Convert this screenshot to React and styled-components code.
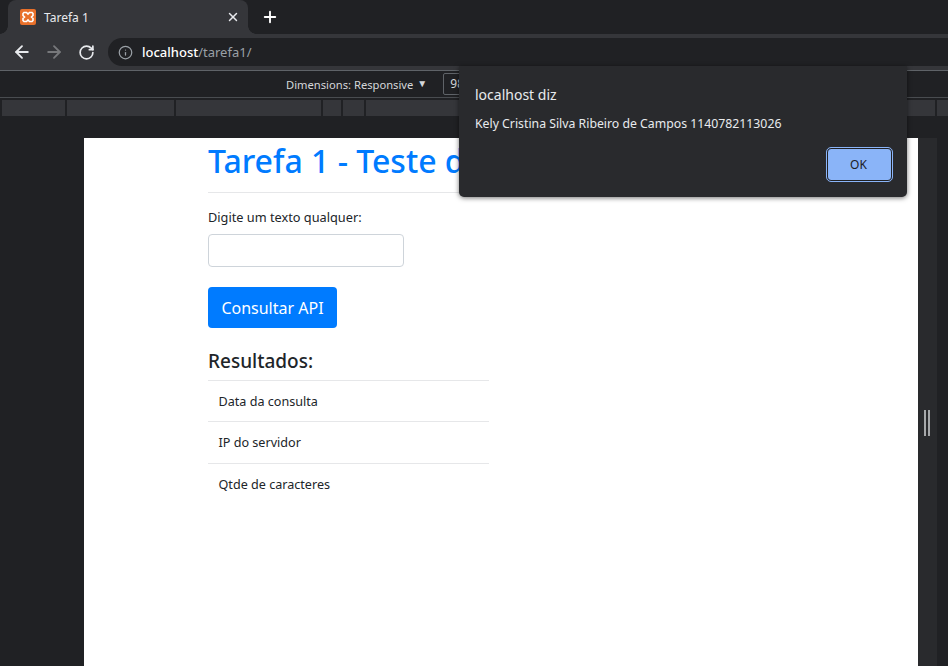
import React from "react";
import styled, { createGlobalStyle } from "styled-components";
import { ArrowLeft, ArrowRight, RotateCw, Info, X, Plus } from "lucide-react";

const GlobalStyle = createGlobalStyle`
  html, body {
    margin: 0;
    padding: 0;
    height: 100%;
    overflow: hidden;
    background: #202124;
  }
  * {
    box-sizing: border-box;
  }
`;

const uiFont = `"Noto Sans", "Open Sans", sans-serif`;

const Window = styled.div`
  position: relative;
  width: 948px;
  height: 666px;
  display: flex;
  flex-direction: column;
  overflow: hidden;
  font-family: ${uiFont};
  background: #202124;
`;

const TabStrip = styled.div`
  height: 34px;
  flex: none;
  display: flex;
  align-items: flex-end;
  padding-left: 8px;
  gap: 13px;
  background: #202124;
`;

const Tab = styled.div`
  position: relative;
  width: 240px;
  height: 34px;
  display: flex;
  align-items: center;
  padding: 0 8px 0 12px;
  gap: 8px;
  background: #35363a;
  border-radius: 8px 8px 0 0;
  color: #e8eaed;
  font-size: 12px;

  &::before,
  &::after {
    content: "";
    position: absolute;
    bottom: 0;
    width: 8px;
    height: 8px;
  }
  &::before {
    left: -8px;
    background: radial-gradient(circle at 0 0, transparent 7.5px, #35363a 8px);
  }
  &::after {
    right: -8px;
    background: radial-gradient(circle at 100% 0, transparent 7.5px, #35363a 8px);
  }
`;

const TabTitle = styled.span`
  flex: 1;
`;

const NewTab = styled.div`
  display: flex;
  align-items: center;
  height: 34px;
  color: #fff;
`;

const Toolbar = styled.div`
  height: 36px;
  flex: none;
  display: flex;
  align-items: center;
  padding-left: 12px;
  gap: 12px;
  background: #35363a;
`;

const NavButton = styled.div`
  width: 20px;
  display: flex;
  justify-content: center;
  color: ${(props) => (props.$disabled ? "#77787b" : "#e8eaed")};
`;

const Omnibox = styled.div`
  flex: 1;
  height: 28px;
  margin-left: 0;
  display: flex;
  align-items: center;
  gap: 9px;
  padding-left: 10px;
  border-radius: 14px 0 0 14px;
  background: #202124;
  color: #9aa0a6;
`;

const Url = styled.span`
  font-size: 13px;
  color: #9aa0a6;

  b {
    font-weight: 500;
    color: #fff;
  }
`;

const DeviceBar = styled.div`
  height: 28px;
  flex: none;
  display: flex;
  align-items: center;
  padding-left: 286px;
  border-top: 1px solid #5f6368;
  border-bottom: 1px solid #494c50;
  background: #202124;
  color: #d5d7da;
  font-size: 11.2px;
`;

const Caret = styled.span`
  width: 12px;
  margin-left: 4px;
  font-size: 10px;
  line-height: 14px;
  margin-top: -3px;
`;

const SizeInput = styled.div`
  width: 60px;
  height: 22px;
  margin-left: 14px;
  padding-left: 6px;
  line-height: 20px;
  font-size: 12px;
  border: 1px solid #5f6368;
  border-radius: 2px;
`;

const Ruler = styled.div`
  height: 16px;
  flex: none;
  margin-top: 2px;
  display: flex;
  padding-left: 2px;
  gap: 2px;
`;

const RulerStep = styled.div`
  width: ${(props) => props.$w}px;
  background: #35363a;
`;

const Canvas = styled.div`
  flex: 1;
  display: flex;
  margin-top: 22px;
  min-height: 0;
`;

const Gutter = styled.div`
  width: 84px;
  flex: none;
`;

const Page = styled.div`
  width: 834px;
  flex: none;
  overflow: hidden;
  padding-left: 124px;
  background: #fff;
  color: #212529;
`;

const Heading = styled.h1`
  margin: 0;
  height: 55px;
  line-height: 46px;
  width: 281px;
  white-space: nowrap;
  font-size: 32px;
  font-weight: 500;
  color: #007bff;
  border-bottom: 1px solid #e6e7e9;
`;

const Label = styled.label`
  display: block;
  margin-top: 15px;
  line-height: 18px;
  font-size: 12.75px;
`;

const TextInput = styled.input`
  display: block;
  width: 196px;
  height: 33px;
  margin-top: 8px;
  border: 1px solid #ced4da;
  border-radius: 4px;
  background: #fff;
  outline: none;
`;

const SubmitButton = styled.button`
  display: block;
  width: 129px;
  height: 41px;
  margin-top: 20px;
  padding: 0;
  border: none;
  border-radius: 4px;
  background: #007bff;
  color: #fff;
  font-family: ${uiFont};
  font-size: 16px;
`;

const ResultsTitle = styled.h4`
  margin: 20px 0 0;
  height: 32px;
  line-height: 26px;
  font-size: 19px;
  font-weight: 500;
`;

const ResultList = styled.ul`
  width: 281px;
  margin: 0;
  padding: 0;
  list-style: none;
`;

const ResultItem = styled.li`
  height: 41.4px;
  padding-left: 10.5px;
  line-height: 41px;
  font-size: 12.6px;
  border-top: 1px solid #e6e7e9;
`;

const ResizeHandle = styled.div`
  width: 19px;
  flex: none;
  display: flex;
  justify-content: center;
  align-items: center;
  gap: 2px;
  padding-top: 42px;
  padding-right: 1px;
  background: #292a2d;
`;

const Grip = styled.div`
  width: 2px;
  height: 26px;
  background: #a6a8aa;
`;

const Dialog = styled.div`
  position: absolute;
  left: 459px;
  top: 66px;
  width: 448px;
  height: 131px;
  padding: 16px;
  border-radius: 0 0 5px 5px;
  background: #292a2d;
  color: #e8eaed;
  box-shadow: 0 1px 5px rgba(0, 0, 0, 0.55);
`;

const DialogTitle = styled.div`
  line-height: 26px;
  font-size: 14px;
`;

const DialogMessage = styled.div`
  margin-top: 7px;
  line-height: 18px;
  font-size: 12.28px;
`;

const DialogFooter = styled.div`
  display: flex;
  justify-content: flex-end;
  margin-top: 15px;
`;

const OkButton = styled.button`
  width: 65px;
  height: 33px;
  padding: 0 2px 0 0;
  margin-right: -1px;
  border: 1.5px solid #202124;
  border-radius: 4px;
  outline: 1.5px solid #8ab4f8;
  outline-offset: 0;
  background: #8ab4f8;
  color: #202124;
  font-family: ${uiFont};
  font-size: 12px;
`;

const XamppIcon = () => (
  <svg width="16" height="16" viewBox="0 0 16 16">
    <rect width="16" height="16" rx="2" fill="#e8702a" />
    <path
      d="M4 3.500h2.500L8 5l1.500-1.500H12l1 1v2L11.500 8 13 9.500v2l-1 1H9.500L8 11l-1.500 1.500H4l-1-1v-2L4.500 8 3 6.500v-2z"
      fill="none"
      stroke="#fff"
      strokeWidth="1.6"
    />
  </svg>
);

const rulerSteps = [63, 107, 145, 18, 21, 569, 11];
const results = ["Data da consulta", "IP do servidor", "Qtde de caracteres"];

const App = () => {
  return (
    <Window>
      <GlobalStyle />
      <TabStrip>
        <Tab>
          <XamppIcon />
          <TabTitle>Tarefa 1</TabTitle>
          <X size={14} strokeWidth={2.5} />
        </Tab>
        <NewTab>
          <Plus size={18} strokeWidth={2.5} />
        </NewTab>
      </TabStrip>
      <Toolbar>
        <NavButton>
          <ArrowLeft size={20} strokeWidth={2.2} />
        </NavButton>
        <NavButton $disabled>
          <ArrowRight size={20} strokeWidth={2.2} />
        </NavButton>
        <NavButton>
          <RotateCw size={17} strokeWidth={2.4} />
        </NavButton>
        <Omnibox>
          <Info size={15} />
          <Url>
            <b>localhost</b>/tarefa1/
          </Url>
        </Omnibox>
      </Toolbar>
      <DeviceBar>
        Dimensions: Responsive
        <Caret>▼</Caret>
        <SizeInput>98</SizeInput>
      </DeviceBar>
      <Ruler>
        {rulerSteps.map((w, i) => (
          <RulerStep key={i} $w={w} />
        ))}
      </Ruler>
      <Canvas>
        <Gutter />
        <Page>
          <Heading>Tarefa 1 - Teste de API</Heading>
          <Label>Digite um texto qualquer:</Label>
          <TextInput />
          <SubmitButton>Consultar API</SubmitButton>
          <ResultsTitle>Resultados:</ResultsTitle>
          <ResultList>
            {results.map((item) => (
              <ResultItem key={item}>{item}</ResultItem>
            ))}
          </ResultList>
        </Page>
        <ResizeHandle>
          <Grip />
          <Grip />
        </ResizeHandle>
      </Canvas>
      <Dialog>
        <DialogTitle>localhost diz</DialogTitle>
        <DialogMessage>Kely Cristina Silva Ribeiro de Campos 1140782113026</DialogMessage>
        <DialogFooter>
          <OkButton>OK</OkButton>
        </DialogFooter>
      </Dialog>
    </Window>
  );
};

export default App;
